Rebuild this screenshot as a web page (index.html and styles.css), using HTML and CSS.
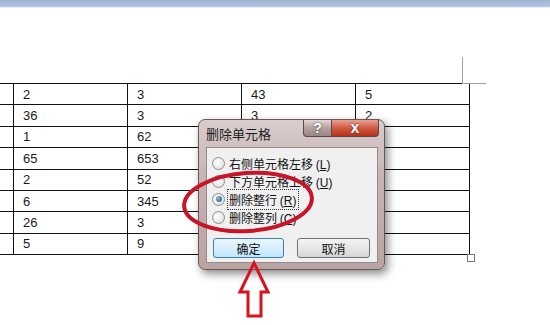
FILE: index.html
```html
<!DOCTYPE html>
<html lang="zh-CN">
<head>
  <meta charset="UTF-8">
  <meta name="viewport" content="width=device-width, initial-scale=1.0">
  <title>删除单元格</title>

  <link rel="stylesheet" href="styles.css">
</head>
<body>
  <div class="ribbon-edge"></div>

  <div class="page">
    <div class="corner-mark"></div>

    <table class="doc-table">
      <tr><td class="cut"></td><td>2</td><td>3</td><td>43</td><td>5</td></tr>
      <tr><td class="cut"></td><td>36</td><td>3</td><td>3</td><td>2</td></tr>
      <tr><td class="cut"></td><td>1</td><td>62</td><td></td><td></td></tr>
      <tr><td class="cut"></td><td>65</td><td>653</td><td></td><td></td></tr>
      <tr><td class="cut"></td><td>2</td><td>52</td><td></td><td></td></tr>
      <tr><td class="cut"></td><td>6</td><td>345</td><td></td><td></td></tr>
      <tr><td class="cut"></td><td>26</td><td>3</td><td></td><td></td></tr>
      <tr><td class="cut"></td><td>5</td><td>9</td><td></td><td></td></tr>
    </table>
    <div class="resize-handle"></div>
  </div>

  <!-- Delete cells dialog -->
  <div class="dialog">
    <div class="title-bar">
      <span class="title">删除单元格</span>
      <div class="title-buttons">
        <span class="btn-help">?</span>
        <span class="btn-close">x</span>
      </div>
    </div>

    <div class="client">
      <div class="options">
        <label class="option"><span class="radio"></span><span>右侧单元格左移 <span class="key">(<u>L</u>)</span></span></label>
        <label class="option"><span class="radio"></span><span>下方单元格上移 <span class="key">(<u>U</u>)</span></span></label>
        <label class="option"><span class="radio checked"></span><span class="focus">删除整行 <span class="key">(<u>R</u>)</span></span></label>
        <label class="option"><span class="radio"></span><span>删除整列 <span class="key">(<u>C</u>)</span></span></label>
      </div>
      <div class="actions">
        <button class="btn default">确定</button>
        <button class="btn">取消</button>
      </div>
    </div>
  </div>

  <!-- hand drawn annotation on top of the screenshot -->
  <svg class="marks" width="550" height="325" viewBox="0 0 550 325">
    <ellipse cx="248" cy="202" rx="64" ry="29" transform="rotate(-4 248 202)" fill="none" stroke="#c81428" stroke-width="4"/>
    <polygon points="254,263 268,292 261,292 261,316 248,316 248,292 240,292" fill="none" stroke="#d8121e" stroke-width="3" stroke-linejoin="miter"/>
  </svg>
</body>
</html>
```

FILE: styles.css
```css
body {
  margin: 0;
  width: 550px;
  height: 325px;
  overflow: hidden;
  background-color: #fff;
  font-family: "Liberation Sans", Arial, sans-serif;
  position: relative;
}

.ribbon-edge {
  height: 7px;
  background: linear-gradient(to bottom, #9fb4d2, #b4c8e2);
  border-bottom: 1px solid #e6eef6;
}

.page {
  position: relative;
  padding-top: 75px;
}

.corner-mark {
  position: absolute;
  left: 462px;
  top: 49px;
  width: 23px;
  height: 26px;
  border-left: 1px solid #a0a0a0;
  border-bottom: 1px solid #a0a0a0;
}

.doc-table {
  border-collapse: collapse;
  font-size: 13px;
  color: #1a1a1a;
}

.doc-table td {
  width: 104px;
  height: 20.4px;
  padding: 0 0 0 9px;
  border: 1px solid #111;
}

.doc-table td.cut {
  width: 13px;
  padding: 0;
  border-left: none;
}

.resize-handle {
  position: absolute;
  left: 467px;
  top: 246px;
  width: 6px;
  height: 6px;
  border: 1px solid #777;
  background-color: #fff;
}

/* dialog */
.dialog {
  position: absolute;
  left: 198px;
  top: 119px;
  width: 185px;
  height: 149px;
  border: 1px solid #6e5454;
  border-radius: 7px;
  background: linear-gradient(to bottom, #d9cdcd, #c6b3b3 40%, #b9a4a4);
  box-shadow: 3px 4px 9px rgba(0, 0, 0, 0.45);
  font-family: "Noto Sans CJK SC", "Liberation Sans", sans-serif;
  color: #111;
}

.title-bar {
  display: flex;
  justify-content: space-between;
  height: 27px;
}

.title {
  font-size: 13px;
  line-height: 27px;
  padding-left: 7px;
  color: #1c1c1c;
}

.title-buttons {
  display: flex;
  margin-right: 5px;
  height: 17px;
}

.btn-help,
.btn-close {
  display: flex;
  align-items: center;
  justify-content: center;
  font-family: "Liberation Sans", Arial, sans-serif;
  font-weight: bold;
  color: #fff;
  border: 1px solid #5e4646;
  border-top: none;
}

.btn-help {
  width: 27px;
  font-size: 14px;
  border-radius: 0 0 0 4px;
  background: linear-gradient(to bottom, #e2d6d6, #b5a0a0 50%, #9c8585);
  text-shadow: 0 0 2px #333;
}

.btn-close {
  width: 46px;
  font-size: 16px;
  border-left: none;
  border-radius: 0 0 4px 0;
  background: linear-gradient(to bottom, #e9a192, #cf5a42 50%, #b8321c);
  text-shadow: 0 0 2px #611;
}

.client {
  margin: 0 6px 0 7px;
  height: 114px;
  border: 1px solid #9b8888;
  background-color: #f0f0f0;
  display: flex;
  flex-direction: column;
}

.options {
  display: flex;
  flex-direction: column;
  padding: 6px 0 0 5px;
}

.option {
  display: flex;
  align-items: center;
  gap: 4px;
  height: 18px;
  font-size: 12px;
  white-space: nowrap;
}

.key {
  font-family: "Liberation Sans", Arial, sans-serif;
  font-size: 12px;
}

.radio {
  width: 11px;
  height: 11px;
  border: 1px solid #8c8e90;
  border-radius: 50%;
  background: radial-gradient(circle at 40% 40%, #fff, #d8dadc);
  display: flex;
  align-items: center;
  justify-content: center;
}

.radio.checked::after {
  content: "";
  width: 6px;
  height: 6px;
  border-radius: 50%;
  background: radial-gradient(circle at 35% 35%, #8fb6d8, #1e4e7c);
}

.focus {
  outline: 1px dotted #333;
  outline-offset: 1px;
  padding-right: 1px;
}

.actions {
  display: flex;
  gap: 13px;
  padding: 12px 0 0 6px;
}

.btn {
  width: 73px;
  height: 20px;
  padding: 0;
  font-family: "Noto Sans CJK SC", sans-serif;
  font-size: 12px;
  color: #111;
  border: 1px solid #707070;
  border-radius: 3px;
  background: linear-gradient(to bottom, #f4f4f4, #e6e6e6 50%, #d6d6d6);
}

.btn.default {
  width: 71px;
  border-color: #3c7fb1;
  background: linear-gradient(to bottom, #eaf6fd, #d7effc 50%, #bde6fd);
}

.marks {
  position: absolute;
  left: 0;
  top: 0;
  pointer-events: none;
}
```
